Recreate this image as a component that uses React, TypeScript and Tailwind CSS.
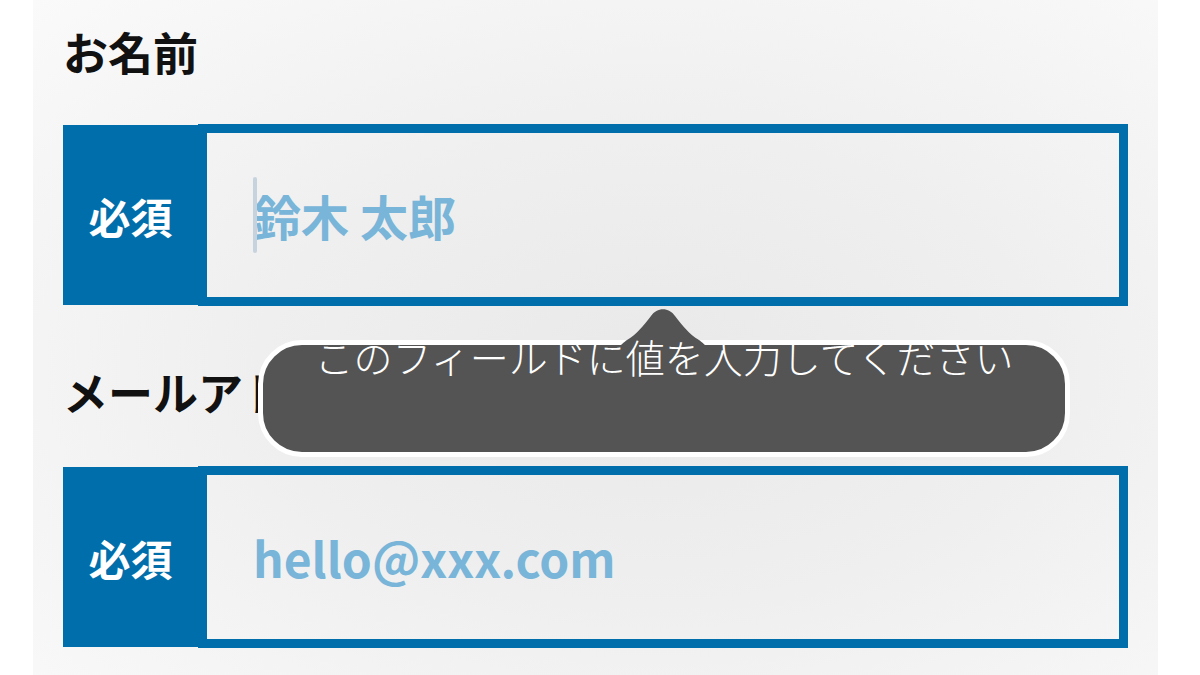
import React from 'react';

const JP = "font-['Noto_Sans_CJK_JP','Noto_Sans',sans-serif]";

type FieldProps = {
    label: string;
    value: string;
    caret?: boolean;
    className?: string;
};

const Field: React.FC<FieldProps> = ({ label, value, caret, className }) => (
    <div className={className}>
        <h2 className="h-[44px] text-[45px] leading-none font-bold text-[#111111]">{label}</h2>
        <div className="mt-[51px] flex items-center">
            {/* required badge */}
            <div className="w-[135px] h-[180px] bg-[#006eaa] flex items-center justify-center">
                <span className="text-[42px] leading-none font-bold text-white pt-[2px]">必須</span>
            </div>
            {/* input */}
            <div className="relative w-[930px] h-[182px] border-[9px] border-[#006eaa] flex items-center pl-[46px]">
                {caret && (
                    <span className="absolute left-[46px] top-[44px] w-[4px] h-[76px] rounded-full bg-[#c6d3de]"></span>
                )}
                <span className="text-[48px] leading-none font-bold text-[#78b5d8]">{value}</span>
            </div>
        </div>
    </div>
);

export default function App() {
    return (
        <div className={`w-full h-[675px] bg-white overflow-hidden ${JP}`}>
            <div className="relative ml-[33px] w-[1125px] h-full pl-[30px] pt-[29px] bg-[radial-gradient(ellipse_at_55%_55%,#e9e9e9_0%,#efefef_45%,#fafafa_100%)]">
                {/* Name */}
                <Field label="お名前" value="鈴木 太郎" caret />

                {/* Email */}
                <Field label="メールアドレス" value="hello@xxx.com" className="mt-[63px] [&>div]:mt-[53px]" />

                {/* Validation tooltip */}
                <div className="absolute left-[225px] top-[306px] w-[812px] h-[151px]">
                    <div className="absolute left-0 top-[34px] w-[812px] h-[117px] rounded-[44px] border-[5px] border-white bg-[#545454]"></div>
                    <svg className="absolute left-[345px] top-0" width="120" height="46" viewBox="0 0 120 46">
                        <path
                            d="M0,46 C14,46 18,38 24,34 C34,28 40,20 48,10 C54,1 66,1 72,10 C80,20 86,28 96,34 C102,38 106,46 120,46 Z"
                            fill="#545454"
                        />
                    </svg>
                    <p className="absolute left-0 top-[31px] w-[812px] text-center text-[39px] leading-none font-light text-white">
                        このフィールドに値を入力してください
                    </p>
                </div>
            </div>
        </div>
    );
}
